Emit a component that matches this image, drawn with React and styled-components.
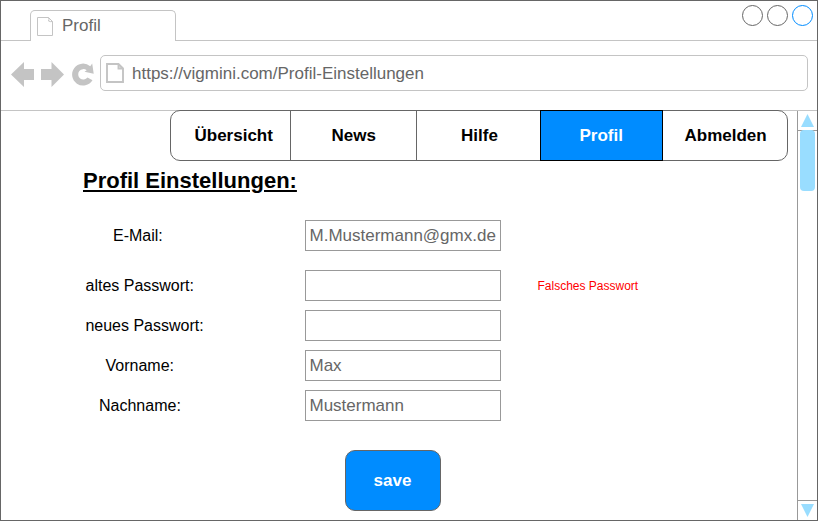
import React from "react";
import styled, { createGlobalStyle } from "styled-components";

const GlobalStyle = createGlobalStyle`
  *, *::before, *::after { box-sizing: border-box; }
  body {
    margin: 0;
    background: #fff;
    font-family: "Liberation Sans", Arial, Helvetica, sans-serif;
  }
`;

const Window = styled.div`
  display: flex;
  flex-direction: column;
  width: 818px;
  height: 521px;
  overflow: hidden;
  border: 1px solid #666;
`;

const TabStrip = styled.header`
  display: flex;
  justify-content: space-between;
  height: 40px;
  padding: 0 4px 0 29px;
  border-bottom: 1px solid #c4c4c4;
`;

const Tab = styled.div`
  display: flex;
  align-items: flex-start;
  width: 146px;
  height: 31px;
  margin-top: 9px;
  padding: 6px 0 0 6px;
  border: 1px solid #c4c4c4;
  border-bottom: 0;
  border-radius: 5px 5px 0 0;
  background: #fff;
`;

const TabTitle = styled.span`
  margin: -1px 0 0 8px;
  font-size: 17px;
  line-height: 20px;
  color: #666;
`;

const WindowControls = styled.div`
  display: flex;
  gap: 3px;
  padding-top: 3px;
`;

const Control = styled.svg`
  display: block;
  width: 22px;
  height: 22px;
  fill: #fff;
  stroke: ${(p) => (p.$active ? "#008cff" : "#666")};
`;

const Toolbar = styled.div`
  display: flex;
  align-items: flex-start;
  height: 69px;
  padding: 14px 9px 0 10px;
`;

const NavIcons = styled.svg`
  display: block;
  width: 89px;
  height: 36px;
  fill: #c4c4c4;
`;

const AddressBar = styled.div`
  display: flex;
  align-items: center;
  flex: 1;
  height: 36px;
  padding-left: 5px;
  border: 1px solid #c4c4c4;
  border-radius: 5px;
`;

const Url = styled.span`
  margin-left: 7px;
  padding-top: 2px;
  font-size: 17px;
  line-height: 20px;
  color: #666;
`;

const PageIcon = styled.svg`
  display: block;
  flex: none;
  fill: none;
  stroke: #c4c4c4;
`;

const Viewport = styled.div`
  display: flex;
  flex: 1;
  border-top: 1px solid #c4c4c4;
`;

const Page = styled.main`
  flex: 1;
`;

const Menu = styled.nav`
  display: flex;
  width: 618px;
  height: 51px;
  margin: -1px 0 0 169px;
  border: 1px solid #666;
  border-radius: 10px;
  background: #fff;
`;

const MenuItem = styled.a`
  width: ${(p) => p.$width}px;
  height: ${(p) => (p.$active ? 51 : 49)}px;
  margin-top: ${(p) => (p.$active ? -1 : 0)}px;
  padding: 15px 0 0 ${(p) => p.$indent}px;
  border: 0 solid #666;
  border-right-width: ${(p) => (p.$divider ? 1 : 0)}px;
  font-size: 17px;
  font-weight: bold;
  line-height: 20px;
  color: #000;
  ${(p) => p.$active && "border: 1px solid #000; background: #008cff; color: #fff;"}
`;

const Title = styled.h1`
  margin: 7px 0 0 82px;
  font-size: 22px;
  font-weight: bold;
  line-height: 26px;
  text-decoration: underline;
`;

const Form = styled.form`
  display: flex;
  flex-direction: column;
  gap: 9px;
  margin-top: 26px;
`;

const Row = styled.div`
  display: flex;
  align-items: center;
  height: 31px;
  margin-bottom: ${(p) => (p.$spaced ? 10 : 0)}px;
`;

const Label = styled.label`
  width: 304px;
  padding-left: ${(p) => p.$indent}px;
  font-size: 16px;
  line-height: 20px;
  color: #000;
`;

const Field = styled.input`
  width: 196px;
  height: 31px;
  margin: 0;
  padding: 0 3.5px;
  border: 1px solid #999;
  border-radius: 0;
  outline: 0;
  background: #fff;
  font: 17px "Liberation Sans", Arial, sans-serif;
  color: #666;
`;

const ErrorText = styled.span`
  margin-left: 36.5px;
  font-size: 12px;
  line-height: 14px;
  color: #f00;
`;

const SaveButton = styled.button`
  width: 96px;
  height: 61px;
  margin: 20px 0 0 344px;
  padding: 0 1px 0 0;
  border: 1px solid #666;
  border-radius: 10px;
  background: #008cff;
  font: bold 17px "Liberation Sans", Arial, sans-serif;
  color: #fff;
`;

const Scrollbar = styled.aside`
  display: flex;
  flex-direction: column;
  width: 21px;
  margin: 0 -1px -1px 0;
  border: 1px solid #999;
  border-top: 0;
`;

const ScrollArrow = styled.svg`
  display: block;
  width: 19px;
  height: 19px;
  fill: #99ddff;
`;

const Track = styled.div`
  flex: 1;
  border: solid #999;
  border-width: 1px 0;
`;

const Thumb = styled.div`
  width: 15px;
  height: 61px;
  margin: -1px 0 0 2px;
  border-radius: 4px;
  background: #99ddff;
`;

const menuItems = [
  { text: "Übersicht", width: 120, indent: 23.5, divider: true },
  { text: "News", width: 126, indent: 40.5, divider: true },
  { text: "Hilfe", width: 123, indent: 44 },
  { text: "Profil", width: 123, indent: 38.5, active: true },
  { text: "Abmelden", width: 124, indent: 21.5 },
];

const fields = [
  { id: "email", label: "E-Mail:", indent: 112, value: "M.Mustermann@gmx.de", spaced: true },
  { id: "old", label: "altes Passwort:", indent: 84.5, value: "", error: "Falsches Passwort" },
  { id: "new", label: "neues Passwort:", indent: 84.4, value: "" },
  { id: "first", label: "Vorname:", indent: 104.5, value: "Max" },
  { id: "last", label: "Nachname:", indent: 98, value: "Mustermann" },
];

export default function App() {
  return (
    <>
      <GlobalStyle />
      <Window>
        <TabStrip>
          <Tab>
            <PageIcon width="17" height="20">
              <path d="M.5.5h11l4 4v14H.5zM11.5.5q1 2 0 3.500 2 1 4 .5" />
            </PageIcon>
            <TabTitle>Profil</TabTitle>
          </Tab>
          <WindowControls>
            {[false, false, true].map((active, i) => (
              <Control key={i} $active={active}>
                <circle cx="11.5" cy="11.5" r="10" />
              </Control>
            ))}
          </WindowControls>
        </TabStrip>
        <Toolbar>
          <NavIcons viewBox="11 55 89 36">
            <path d="M11 74.5 24 62v7H34v11H24v7zM64 74.500 51.500 62v7H41v11h10.500v7z" />
            <path d="M92.200 63.500 93.700 73.700 84.500 71.800 86.700 70.300A5.200 5.200 0 1 0 87.500 77.500L92.500 80.300A11 11 0 1 1 90.200 66.200z" />
          </NavIcons>
          <AddressBar>
            <PageIcon width="19" height="21" strokeWidth="1.9">
              <path d="M1 1h11.500l4.500 4.500V19H1zM12.500 1v4.500H17" />
            </PageIcon>
            <Url>https://vigmini.com/Profil-Einstellungen</Url>
          </AddressBar>
        </Toolbar>
        <Viewport>
          <Page>
            <Menu>
              {menuItems.map((m) => (
                <MenuItem key={m.text} $width={m.width} $indent={m.indent} $divider={m.divider} $active={m.active}>
                  {m.text}
                </MenuItem>
              ))}
            </Menu>
            <Title>Profil Einstellungen:</Title>
            <Form>
              {fields.map((f) => (
                <Row key={f.id} $spaced={f.spaced}>
                  <Label htmlFor={f.id} $indent={f.indent}>{f.label}</Label>
                  <Field id={f.id} defaultValue={f.value} />
                  {f.error && <ErrorText>{f.error}</ErrorText>}
                </Row>
              ))}
              <SaveButton type="button">save</SaveButton>
            </Form>
          </Page>
          <Scrollbar>
            <ScrollArrow>
              <path d="M9.500 3 16 16H3z" />
            </ScrollArrow>
            <Track>
              <Thumb />
            </Track>
            <ScrollArrow>
              <path d="M3 3h13L9.500 16z" />
            </ScrollArrow>
          </Scrollbar>
        </Viewport>
      </Window>
    </>
  );
}
